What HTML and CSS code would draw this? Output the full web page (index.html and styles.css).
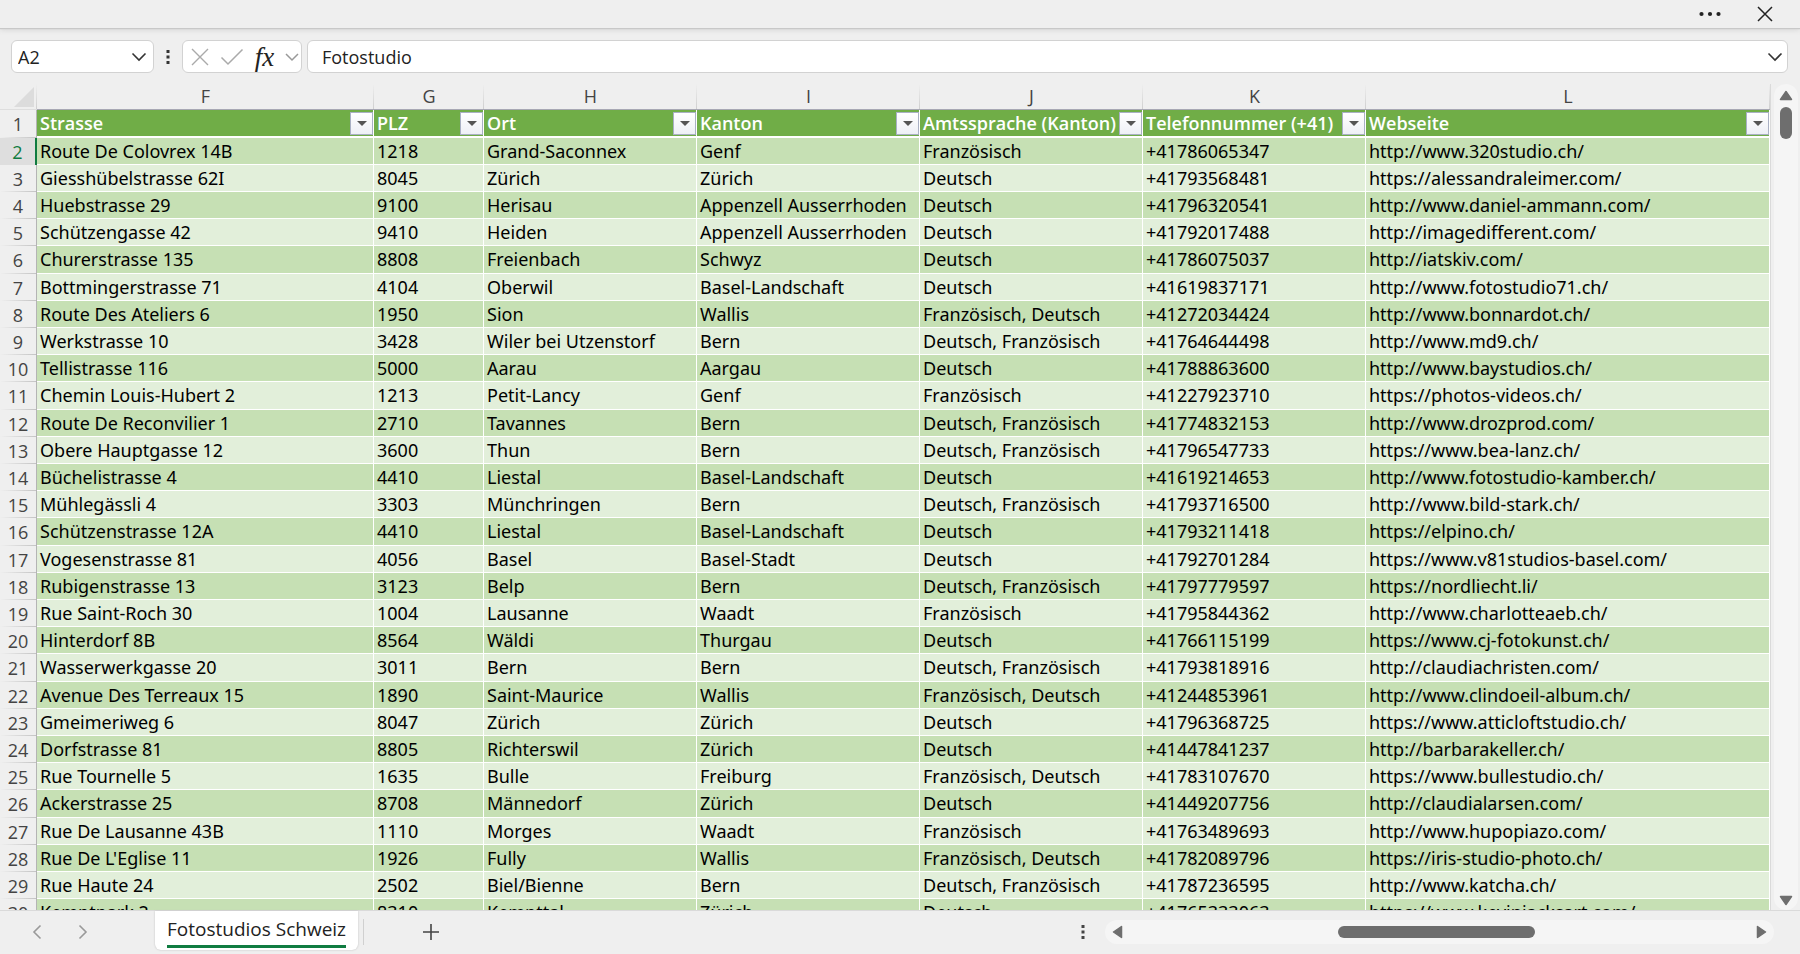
FILE: index.html
```
<!DOCTYPE html>
<html lang="de">
  <head>
    <meta charset="UTF-8" />
    <meta name="viewport" content="width=device-width, initial-scale=1.0" />
    <title>Fotostudios Schweiz</title>
    <link rel="stylesheet" href="styles.css">
  </head>
  <body>
    <header class="titlebar">
      <button class="icon-btn" aria-label="Mehr">
        <svg width="22" height="6" viewBox="0 0 22 6"><g fill="#222"><circle cx="2.500" cy="3" r="2.100" /><circle cx="11" cy="3" r="2.100" /><circle cx="19.500" cy="3" r="2.100" /></g></svg>
      </button>
      <button class="icon-btn" aria-label="Schliessen">
        <svg width="16" height="16" viewBox="0 0 16 16"><path d="M1 1l14 14M15 1L1 15" stroke="#222" stroke-width="1.500" fill="none" /></svg>
      </button>
    </header>

    <div class="formula-bar">
      <div class="box name-box">
        <input type="text" value="A2" aria-label="Namenfeld" />
        <button class="icon-btn" aria-label="Namen anzeigen">
          <svg width="16" height="10" viewBox="0 0 16 10"><path d="M1.500 1.500L8 8l6.500-6.500" stroke="#333" stroke-width="1.600" fill="none" /></svg>
        </button>
      </div>
      <svg class="grip" width="4" height="16" viewBox="0 0 4 16"><path d="M.5 1h3v3h-3zM.5 6.500h3v3h-3zM.5 12h3v3h-3z" fill="#333" /></svg>
      <div class="box fx-box">
        <button class="icon-btn" aria-label="Abbrechen">
          <svg width="18" height="18" viewBox="0 0 18 18"><path d="M1 1l16 16M17 1L1 17" stroke="#aaa" stroke-width="1.400" fill="none" /></svg>
        </button>
        <button class="icon-btn" aria-label="Eingeben">
          <svg width="24" height="18" viewBox="0 0 24 18"><path d="M1.500 9.500L8 16 22.500 1.500" stroke="#aaa" stroke-width="1.500" fill="none" /></svg>
        </button>
        <button class="icon-btn fx" aria-label="Funktion einfügen">fx</button>
        <button class="icon-btn" aria-label="Funktionen">
          <svg width="14" height="10" viewBox="0 0 14 10"><path d="M1 2l6 6 6-6" stroke="#999" stroke-width="1.500" fill="none" /></svg>
        </button>
      </div>
      <div class="box formula-box">
        <input type="text" value="Fotostudio" aria-label="Bearbeitungsleiste" />
        <button class="icon-btn" aria-label="Erweitern">
          <svg width="16" height="10" viewBox="0 0 16 10"><path d="M1.500 1.500L8 8l6.500-6.500" stroke="#333" stroke-width="1.600" fill="none" /></svg>
        </button>
      </div>
    </div>

    <main class="workspace">
      <div class="sheet">
        <table>
          <colgroup>
            <col class="w-num" /><col class="w-street" /><col class="w-plz" /><col class="w-ort" />
            <col class="w-std" /><col class="w-std" /><col class="w-std" /><col />
          </colgroup>
          <thead>
            <tr class="letters">
              <th class="corner"><svg width="20" height="20" viewBox="0 0 20 20"><path d="M20 0v20H0z" fill="#dcdcdc" /></svg></th>
              <th>F</th><th>G</th><th>H</th><th>I</th><th>J</th><th>K</th><th>L</th>
            </tr>
            <tr class="titles">
              <th class="num">1</th>
              <th><div>Strasse<button aria-label="Filter Strasse"></button></div></th>
              <th><div>PLZ<button aria-label="Filter PLZ"></button></div></th>
              <th><div>Ort<button aria-label="Filter Ort"></button></div></th>
              <th><div>Kanton<button aria-label="Filter Kanton"></button></div></th>
              <th><div>Amtssprache (Kanton)<button aria-label="Filter Amtssprache"></button></div></th>
              <th><div>Telefonnummer (+41)<button aria-label="Filter Telefonnummer"></button></div></th>
              <th><div>Webseite<button aria-label="Filter Webseite"></button></div></th>
            </tr>
          </thead>
          <tbody>
            <tr class="active"><th>2</th><td>Route De Colovrex 14B</td><td>1218</td><td>Grand-Saconnex</td><td>Genf</td><td>Französisch</td><td>+41786065347</td><td>http://www.320studio.ch/</td></tr>
            <tr><th>3</th><td>Giesshübelstrasse 62I</td><td>8045</td><td>Zürich</td><td>Zürich</td><td>Deutsch</td><td>+41793568481</td><td>https://alessandraleimer.com/</td></tr>
            <tr><th>4</th><td>Huebstrasse 29</td><td>9100</td><td>Herisau</td><td>Appenzell Ausserrhoden</td><td>Deutsch</td><td>+41796320541</td><td>http://www.daniel-ammann.com/</td></tr>
            <tr><th>5</th><td>Schützengasse 42</td><td>9410</td><td>Heiden</td><td>Appenzell Ausserrhoden</td><td>Deutsch</td><td>+41792017488</td><td>http://imagedifferent.com/</td></tr>
            <tr><th>6</th><td>Churerstrasse 135</td><td>8808</td><td>Freienbach</td><td>Schwyz</td><td>Deutsch</td><td>+41786075037</td><td>http://iatskiv.com/</td></tr>
            <tr><th>7</th><td>Bottmingerstrasse 71</td><td>4104</td><td>Oberwil</td><td>Basel-Landschaft</td><td>Deutsch</td><td>+41619837171</td><td>http://www.fotostudio71.ch/</td></tr>
            <tr><th>8</th><td>Route Des Ateliers 6</td><td>1950</td><td>Sion</td><td>Wallis</td><td>Französisch, Deutsch</td><td>+41272034424</td><td>http://www.bonnardot.ch/</td></tr>
            <tr><th>9</th><td>Werkstrasse 10</td><td>3428</td><td>Wiler bei Utzenstorf</td><td>Bern</td><td>Deutsch, Französisch</td><td>+41764644498</td><td>http://www.md9.ch/</td></tr>
            <tr><th>10</th><td>Tellistrasse 116</td><td>5000</td><td>Aarau</td><td>Aargau</td><td>Deutsch</td><td>+41788863600</td><td>http://www.baystudios.ch/</td></tr>
            <tr><th>11</th><td>Chemin Louis-Hubert 2</td><td>1213</td><td>Petit-Lancy</td><td>Genf</td><td>Französisch</td><td>+41227923710</td><td>https://photos-videos.ch/</td></tr>
            <tr><th>12</th><td>Route De Reconvilier 1</td><td>2710</td><td>Tavannes</td><td>Bern</td><td>Deutsch, Französisch</td><td>+41774832153</td><td>http://www.drozprod.com/</td></tr>
            <tr><th>13</th><td>Obere Hauptgasse 12</td><td>3600</td><td>Thun</td><td>Bern</td><td>Deutsch, Französisch</td><td>+41796547733</td><td>https://www.bea-lanz.ch/</td></tr>
            <tr><th>14</th><td>Büchelistrasse 4</td><td>4410</td><td>Liestal</td><td>Basel-Landschaft</td><td>Deutsch</td><td>+41619214653</td><td>http://www.fotostudio-kamber.ch/</td></tr>
            <tr><th>15</th><td>Mühlegässli 4</td><td>3303</td><td>Münchringen</td><td>Bern</td><td>Deutsch, Französisch</td><td>+41793716500</td><td>http://www.bild-stark.ch/</td></tr>
            <tr><th>16</th><td>Schützenstrasse 12A</td><td>4410</td><td>Liestal</td><td>Basel-Landschaft</td><td>Deutsch</td><td>+41793211418</td><td>https://elpino.ch/</td></tr>
            <tr><th>17</th><td>Vogesenstrasse 81</td><td>4056</td><td>Basel</td><td>Basel-Stadt</td><td>Deutsch</td><td>+41792701284</td><td>https://www.v81studios-basel.com/</td></tr>
            <tr><th>18</th><td>Rubigenstrasse 13</td><td>3123</td><td>Belp</td><td>Bern</td><td>Deutsch, Französisch</td><td>+41797779597</td><td>https://nordliecht.li/</td></tr>
            <tr><th>19</th><td>Rue Saint-Roch 30</td><td>1004</td><td>Lausanne</td><td>Waadt</td><td>Französisch</td><td>+41795844362</td><td>http://www.charlotteaeb.ch/</td></tr>
            <tr><th>20</th><td>Hinterdorf 8B</td><td>8564</td><td>Wäldi</td><td>Thurgau</td><td>Deutsch</td><td>+41766115199</td><td>https://www.cj-fotokunst.ch/</td></tr>
            <tr><th>21</th><td>Wasserwerkgasse 20</td><td>3011</td><td>Bern</td><td>Bern</td><td>Deutsch, Französisch</td><td>+41793818916</td><td>http://claudiachristen.com/</td></tr>
            <tr><th>22</th><td>Avenue Des Terreaux 15</td><td>1890</td><td>Saint-Maurice</td><td>Wallis</td><td>Französisch, Deutsch</td><td>+41244853961</td><td>http://www.clindoeil-album.ch/</td></tr>
            <tr><th>23</th><td>Gmeimeriweg 6</td><td>8047</td><td>Zürich</td><td>Zürich</td><td>Deutsch</td><td>+41796368725</td><td>https://www.atticloftstudio.ch/</td></tr>
            <tr><th>24</th><td>Dorfstrasse 81</td><td>8805</td><td>Richterswil</td><td>Zürich</td><td>Deutsch</td><td>+41447841237</td><td>http://barbarakeller.ch/</td></tr>
            <tr><th>25</th><td>Rue Tournelle 5</td><td>1635</td><td>Bulle</td><td>Freiburg</td><td>Französisch, Deutsch</td><td>+41783107670</td><td>https://www.bullestudio.ch/</td></tr>
            <tr><th>26</th><td>Ackerstrasse 25</td><td>8708</td><td>Männedorf</td><td>Zürich</td><td>Deutsch</td><td>+41449207756</td><td>http://claudialarsen.com/</td></tr>
            <tr><th>27</th><td>Rue De Lausanne 43B</td><td>1110</td><td>Morges</td><td>Waadt</td><td>Französisch</td><td>+41763489693</td><td>http://www.hupopiazo.com/</td></tr>
            <tr><th>28</th><td>Rue De L'Eglise 11</td><td>1926</td><td>Fully</td><td>Wallis</td><td>Französisch, Deutsch</td><td>+41782089796</td><td>https://iris-studio-photo.ch/</td></tr>
            <tr><th>29</th><td>Rue Haute 24</td><td>2502</td><td>Biel/Bienne</td><td>Bern</td><td>Deutsch, Französisch</td><td>+41787236595</td><td>http://www.katcha.ch/</td></tr>
            <tr><th>30</th><td>Kemptpark 2</td><td>8310</td><td>Kempttal</td><td>Zürich</td><td>Deutsch</td><td>+41765333063</td><td>https://www.kevinjacksart.com/</td></tr>
          </tbody>
        </table>
      </div>
      <div class="scroll-y">
        <svg width="14" height="11" viewBox="0 0 14 11"><path d="M7 1.500L12.500 9.500H1.500z" fill="#6e6e6e" stroke="#6e6e6e" stroke-width="1.500" stroke-linejoin="round" /></svg>
        <div class="thumb"></div>
        <svg class="end" width="14" height="11" viewBox="0 0 14 11"><path d="M7 9.500L1.500 1.500h11z" fill="#6e6e6e" stroke="#6e6e6e" stroke-width="1.500" stroke-linejoin="round" /></svg>
      </div>
    </main>

    <footer class="tabbar">
      <button class="icon-btn nav" aria-label="Vorheriges Blatt">
        <svg width="10" height="16" viewBox="0 0 10 16"><path d="M8.500 1.500L2 8l6.500 6.500" stroke="#999" stroke-width="1.600" fill="none" /></svg>
      </button>
      <button class="icon-btn nav" aria-label="Nächstes Blatt">
        <svg width="10" height="16" viewBox="0 0 10 16"><path d="M1.500 1.500L8 8l-6.500 6.500" stroke="#999" stroke-width="1.600" fill="none" /></svg>
      </button>
      <button class="tab"><span>Fotostudios Schweiz</span></button>
      <div class="divider"></div>
      <button class="icon-btn add" aria-label="Neues Blatt">
        <svg width="16" height="16" viewBox="0 0 16 16"><path d="M8 0v16M0 8h16" stroke="#444" stroke-width="1.600" fill="none" /></svg>
      </button>
      <svg class="grip" width="4" height="16" viewBox="0 0 4 16"><path d="M.5 1h3v3h-3zM.5 6.500h3v3h-3zM.5 12h3v3h-3z" fill="#444" /></svg>
      <div class="scroll-x">
        <svg width="11" height="14" viewBox="0 0 11 14"><path d="M1.500 7L9.500 1.500v11z" fill="#6e6e6e" stroke="#6e6e6e" stroke-width="1.500" stroke-linejoin="round" /></svg>
        <div class="track"><div class="thumb"></div></div>
        <svg width="11" height="14" viewBox="0 0 11 14"><path d="M9.500 7L1.500 1.500v11z" fill="#6e6e6e" stroke="#6e6e6e" stroke-width="1.500" stroke-linejoin="round" /></svg>
      </div>
    </footer>
  </body>
</html>
```
FILE: styles.css
```
* {
  box-sizing: border-box;
}

body {
  margin: 0;
  height: 100vh;
  display: flex;
  flex-direction: column;
  overflow: hidden;
  background: #efefef;
  color: #222;
  font-family: "Open Sans", "Noto Sans", sans-serif;
  font-size: 18px;
}

svg {
  display: block;
  flex: none;
}

button,
input {
  font: inherit;
  color: inherit;
}

.icon-btn {
  display: flex;
  align-items: center;
  justify-content: center;
  padding: 0;
  border: none;
  background: none;
  cursor: pointer;
}

.titlebar {
  display: flex;
  justify-content: flex-end;
  align-items: center;
  gap: 36px;
  flex: none;
  height: 28px;
  padding-right: 27px;
  box-shadow: 0 1px 1px #c8c8c8, 0 2px 5px #d6d6d6;
}

.formula-bar {
  display: flex;
  align-items: center;
  flex: none;
  padding: 12px 12px 11px 11px;
}

.box {
  display: flex;
  align-items: center;
  height: 33px;
  border: 1px solid #d2d2d2;
  border-radius: 6px;
  background: #fff;
}

.box input {
  flex: 1;
  min-width: 0;
  padding: 0;
  border: none;
  outline: none;
  background: none;
}

.name-box {
  width: 143px;
  padding: 0 6px;
}

.formula-bar .grip {
  margin: 0 12px;
}

.fx-box {
  width: 120px;
  padding: 0 2px 0 8px;
  justify-content: space-between;
}

.fx {
  font-family: "Liberation Serif", serif;
  font-size: 27px;
  font-style: italic;
  line-height: 26px;
  color: #222;
}

.formula-box {
  flex: 1;
  margin-left: 5px;
  padding: 0 4px 0 14px;
}

.workspace {
  display: flex;
  flex: 1;
  min-height: 0;
}

.sheet {
  flex: 1;
  overflow: hidden;
  border-right: 1px solid #dadada;
}

table {
  width: 100%;
  table-layout: fixed;
  border-collapse: separate;
  border-spacing: 0;
}

.w-num { width: 37px; }
.w-street { width: 337px; }
.w-plz { width: 110px; }
.w-ort { width: 213px; }
.w-std { width: 223px; }

th,
td {
  padding: 0;
  text-align: left;
  white-space: nowrap;
}

.letters th {
  height: 26px;
  border-bottom: 1px solid #a8a8b4;
  background: linear-gradient(to bottom, #efefef, #cfcfcf) right / 1px 100% no-repeat;
  font-weight: normal;
  line-height: 25px;
  text-align: center;
  color: #444;
}

.letters .corner {
  padding-left: 14px;
  border-bottom-color: #dedede;
}

.titles th {
  height: 28px;
  border-right: 1px solid #fff;
  border-bottom: 2px solid #fff;
  background: #70ad47;
  color: #fff;
  font-weight: 600;
  line-height: 26px;
}

.titles div {
  display: flex;
  align-items: center;
  justify-content: space-between;
  padding-left: 3px;
}

.titles button {
  width: 23px;
  height: 23px;
  padding: 0;
  border: 1px solid #a9b0c4;
  background: linear-gradient(#fff, #eef0f6);
}

/* drop-down arrow of the filter */
.titles button::before {
  content: "";
  display: block;
  width: 0;
  margin: auto;
  border: 5px solid transparent;
  border-top-color: #555;
  border-bottom: none;
}

td {
  padding-left: 3px;
  border-right: 1px solid #fff;
  border-bottom: 1px solid #fff;
  background: #e2efda;
  color: #000;
  font-family: "Noto Sans", "Open Sans", sans-serif;
  line-height: 26px;
}

tbody tr:nth-child(odd) td {
  background: #c6e0b4;
}

/* rows are slightly taller than 27px on average */
tbody tr:nth-child(5n) td {
  line-height: 27px;
}

tbody th,
.titles .num {
  border-right: 1px solid #b4b4b4;
  border-bottom: none;
  background: linear-gradient(to right, #efefef, #c4c4c4) bottom / 100% 1px no-repeat;
  color: #444;
  font-weight: normal;
  text-align: center;
}

tbody .active th {
  border-right: 2px solid #107c41;
  background: #dedede;
  color: #107c41;
}

.scroll-y {
  display: flex;
  flex-direction: column;
  align-items: center;
  width: 24px;
  margin: 0 2px 0 3px;
  padding: 6px 0 4px;
  border-radius: 12px;
  background: #f5f5f5;
}

.thumb {
  border-radius: 6px;
  background: #6e6e6e;
}

.scroll-y .thumb {
  width: 12px;
  height: 32px;
  margin-top: 6px;
}

.scroll-y .end {
  margin-top: auto;
}

.tabbar {
  display: flex;
  align-items: center;
  flex: none;
  height: 44px;
  padding: 0 26px 2px 14px;
  border-top: 1px solid #dadada;
}

.nav {
  width: 46px;
}

.tab {
  align-self: flex-start;
  height: 39px;
  margin-left: 49px;
  padding: 0 12px;
  border: none;
  border-radius: 0 0 6px 6px;
  background: #fff;
  box-shadow: 0 0 2px #bbb;
  font-size: 19px;
  font-weight: 500;
  line-height: 32px;
}

.tab span {
  display: block;
  border-bottom: 3px solid #107c41;
}

.divider {
  width: 1px;
  height: 26px;
  margin-left: 5px;
  background: #d0d0d0;
}

.add {
  margin-left: 59px;
}

.tabbar .grip {
  margin-left: auto;
}

.scroll-x {
  display: flex;
  align-items: center;
  width: 38%;
  height: 24px;
  margin-left: 20px;
  padding: 0 7px;
  border-radius: 12px;
  background: #f5f5f5;
}

.track {
  flex: 1;
}

.track .thumb {
  width: 31%;
  height: 12px;
  margin-left: 34%;
}
```
